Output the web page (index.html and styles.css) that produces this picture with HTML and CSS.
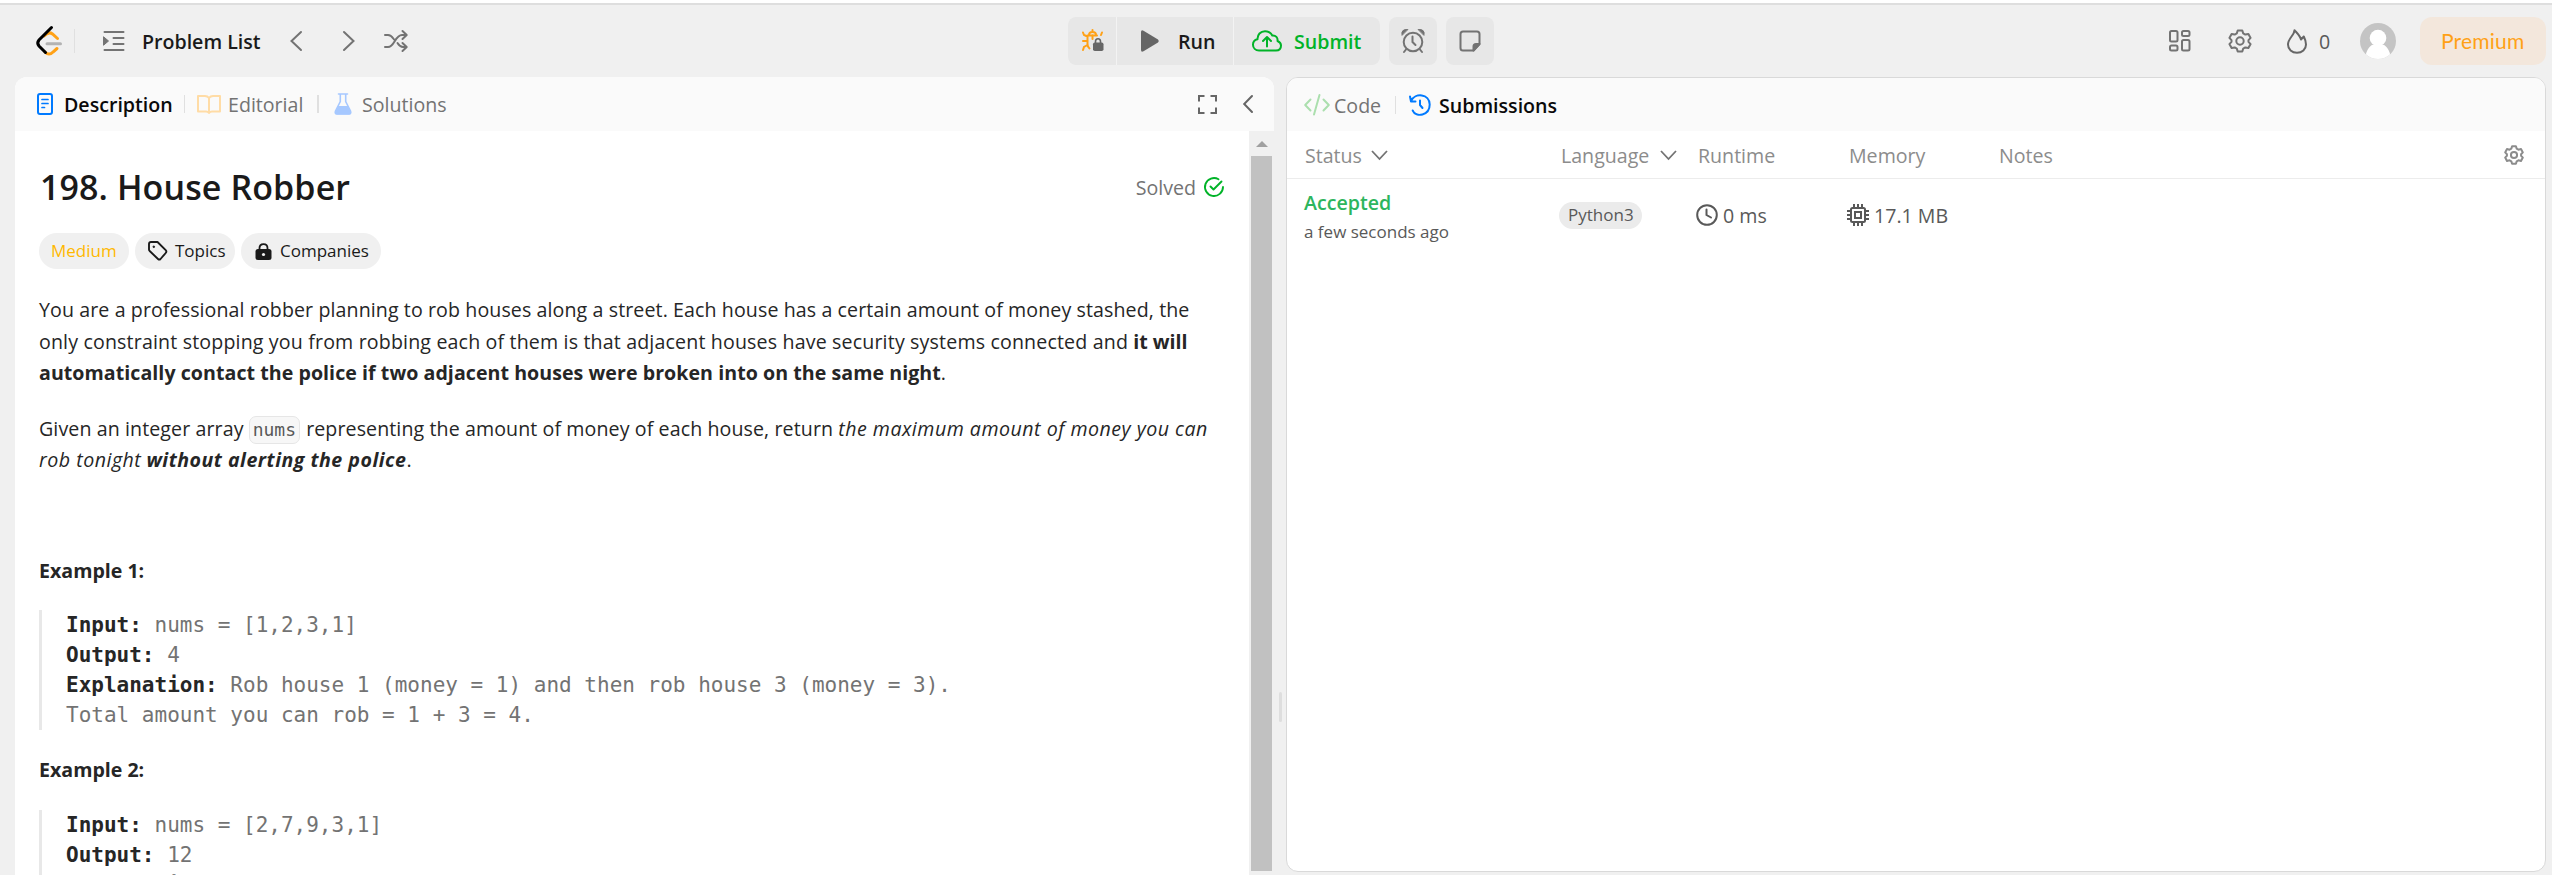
FILE: index.html
```html
<!DOCTYPE html>
<html lang="en">
<head>
<meta charset="utf-8">
<title>House Robber</title>
<link rel="stylesheet" href="styles.css">
</head>
<body>
<header class="topbar">
  <div class="nav">
    <svg class="logo" viewBox="0 0 26 30" fill="none" stroke-width="3" stroke-linecap="round"><path d="M8 10Q12.500 5 16.500 8L21.500 12.500M9 26Q13 30 17 26L21 22.500" stroke="#ffa116"/><path d="M15.500 1.500L3 14Q.500 17 3 20L9.500 26.500" stroke="#000"/><path d="M11 17.700H24.500" stroke="#b3b3b3"/></svg>
    <i class="sep sep-nav"></i>
    <svg class="list-icon" viewBox="0 0 22 20" fill="none" stroke="#737373" stroke-width="2" stroke-linecap="round"><path d="M1.500 1H20.500M10.500 7H20.500M10.500 13H20.500M1.500 19H20.500"/><path d="M.800 6L5.500 10L.800 14Z" fill="#737373" stroke-width="1"/></svg>
    <span class="t problem-list">Problem List</span>
    <svg class="prev" viewBox="0 0 12 20" fill="none" stroke="#737373" stroke-width="2" stroke-linecap="round"><path d="M11 1L1.500 10L11 19"/></svg>
    <svg class="next" viewBox="0 0 12 20" fill="none" stroke="#737373" stroke-width="2" stroke-linecap="round"><path d="M1 1L10.500 10L1 19"/></svg>
    <svg class="shuffle" viewBox="0 0 24 22" fill="none" stroke="#737373" stroke-width="2" stroke-linecap="round" stroke-linejoin="round"><path d="M1 5H4C7.500 5 8.500 7.500 10 9.500M1 17H4C10.500 17 11 5 18 5H22.500M13.500 13C15 15.500 16 17 19 17H22.500M18.500 1L22.700 5L18.500 9M18.500 13L22.700 17L18.500 21"/></svg>
  </div>
  <div class="actions">
    <div class="group">
      <button class="debug"><svg class="bug" viewBox="0 0 22 22" fill="none" stroke="#ffa116" stroke-width="2" stroke-linecap="round"><path d="M7 5C7 1 14 1 14 5M5.500 5.500H15M5.500 5.500V14Q5.500 17 7.500 18.500M10.500 1V0M1 2.500L2 5L5.500 6.500M1 11H5M5.500 15L2 17L1 20M20 2.500L19 5"/><path d="M10.500 5.500V9"/><path d="M13.500 13V11.500C13.500 7.800 18.500 7.800 18.500 11.500V13" stroke="#666" stroke-width="1.600"/><rect x="11" y="12.500" width="10.500" height="8.500" rx="1.800" fill="#666" stroke="none"/></svg></button>
      <button class="run"><svg class="play" viewBox="0 0 18 22"><path d="M0 2Q0-.500 2.500.700L17 9.500Q18.700 11 17 12.500L2.500 21.300Q0 22.500 0 20Z" fill="#666"/></svg><span class="t">Run</span></button>
      <button class="submit"><svg class="cloud" viewBox="0 0 30 22" fill="none" stroke="#01b328" stroke-width="2" stroke-linecap="round" stroke-linejoin="round"><path d="M7 20.500C3.500 20.500 1 18 1 14.800C1 12 3 9.800 5.500 9.300C5.300 4.500 8.500 1.200 13 1.200C16.500 1.200 19 3 20.300 5.500C23.800 5.200 26 7.500 25.500 11C28 12 29 13.700 29 15.500C29 18.500 27 20.500 24 20.500ZM15 16.500V7.500M11 11L15 7L19 11"/></svg><span class="t">Submit</span></button>
    </div>
    <button class="square"><svg class="alarm" viewBox="0 0 24 24" fill="none" stroke="#737373" stroke-width="2" stroke-linecap="round"><circle cx="12" cy="13" r="9.300"/><path d="M11.500 7.500V13L14.500 16M5 20.500L3 23M19 20.500L21 23"/><path d="M1 6Q-.300 0 6.500 .500ZM23 6Q24.300 0 17.500 .500Z" fill="#737373" stroke-width="1" stroke-linejoin="round"/></svg></button>
    <button class="square"><svg class="note" viewBox="0 0 22 22" fill="none" stroke="#737373" stroke-width="2" stroke-linejoin="round"><path d="M4 1.500H18Q20.500 1.500 20.500 4V14L14.500 20.500H4Q1.500 20.500 1.500 18V4Q1.500 1.500 4 1.500Z"/><path d="M14.500 20.500V16.500Q14.500 14 17 14H20.500Z" fill="#737373"/></svg></button>
  </div>
  <div class="account">
    <svg class="grid-icon" viewBox="0 0 22 22" fill="none" stroke="#737373" stroke-width="2"><rect x="1" y="1" width="7.500" height="10.500" rx="1.500"/><rect x="13" y="1" width="7.500" height="5" rx="1.500"/><rect x="1" y="15.500" width="7.500" height="5" rx="1.500"/><rect x="13" y="10" width="7.500" height="10.500" rx="1.500"/></svg>
    <svg class="gear" viewBox="0 0 24 24" fill="none" stroke="#737373" stroke-width="2" stroke-linejoin="round"><path d="M9.700 1.500H14.300L15.200 4.400L17.300 5.600L20.400 4.900L22.600 8.900L20.500 11.100V12.900L22.600 15.100L20.400 19.100L17.300 18.400L15.200 19.600L14.300 22.500H9.700L8.800 19.600L6.700 18.400L3.600 19.100L1.400 15.100L3.500 12.900V11.100L1.400 8.900L3.600 4.900L6.700 5.600L8.800 4.400Z"/><circle cx="12" cy="12" r="3.700"/></svg>
    <div class="streak"><svg class="flame" viewBox="0 0 20 25" fill="none" stroke="#666" stroke-width="2" stroke-linejoin="round"><path d="M7.500 1.200C7.500 6 1 9.500 1 15.500C1 20.500 5 23.800 10 23.800S19 20.500 19 15.500C19 12 17.800 9.500 16.800 7.500L14 10.500C13 6.500 10 4 7.500 1.200Z"/></svg><span class="t">0</span></div>
    <svg class="avatar" viewBox="0 0 36 36"><clipPath id="round"><circle cx="18" cy="18" r="18"/></clipPath><g clip-path="url(#round)"><rect width="36" height="36" fill="#c4c4c4"/><circle cx="18" cy="15" r="8.300" fill="#fff"/><path d="M5 36C6 26 11 21.500 14 21.500H22C25 21.500 30 26 31 36Z" fill="#fff"/></g></svg>
    <button class="premium"><span>Premium</span></button>
  </div>
</header>
<main class="workspace">
  <section class="panel problem">
    <div class="tabs">
      <svg class="doc" viewBox="0 0 16 22" fill="none" stroke="#007aff" stroke-width="2" stroke-linecap="round"><rect x="1" y="1" width="14" height="20" rx="2"/><path d="M5 6.500H11M5 10.500H11M5 14.500H7.500" stroke-width="1.700"/></svg>
      <span class="t tab active description">Description</span>
      <i class="sep"></i>
      <svg class="book" viewBox="0 0 24 19" fill="none" stroke="#ffdca6" stroke-width="2" stroke-linejoin="round"><path d="M12 3Q10.500 1 8 1H1V16.500H9Q11 16.500 12 18Q13 16.500 15 16.500H23V1H16Q13.500 1 12 3V17"/></svg>
      <span class="t tab editorial">Editorial</span>
      <i class="sep"></i>
      <svg class="flask" viewBox="0 0 18 22"><path d="M4.500 1H13.500M6.300 1V8.500L1.500 18Q.500 21 3 21H15Q17.500 21 16.500 18L11.700 8.500V1" fill="none" stroke="#a6c8ff" stroke-width="1.600" stroke-linecap="round"/><path d="M4 13H14L17 19Q17.500 21.500 15 21.500H3Q.500 21.500 1 19Z" fill="#a6c8ff"/></svg>
      <span class="t tab solutions">Solutions</span>
      <svg class="expand" viewBox="0 0 19 19" fill="none" stroke="#666" stroke-width="2"><path d="M1 6.500V1H6.500M12.500 1H18V6.500M18 12.500V18H12.500M6.500 18H1V12.500"/></svg>
      <svg class="collapse" viewBox="0 0 10 18" fill="none" stroke="#666" stroke-width="2" stroke-linecap="round"><path d="M9 1L1.200 9L9 17"/></svg>
    </div>
    <div class="body">
      <article class="content">
        <div class="title-row">
          <h1>198. House Robber</h1>
          <div class="solved"><span class="t">Solved</span><svg class="check" viewBox="0 0 20 20" fill="none" stroke="#01b328" stroke-width="1.900" stroke-linecap="round" stroke-linejoin="round"><path d="M14.500 2.200A9 9 0 1 0 19 10M6.500 9.500L9.500 12.500L17.500 4.500"/></svg></div>
        </div>
        <div class="chips">
          <span class="chip medium">Medium</span>
          <span class="chip topics"><svg class="tag" viewBox="0 0 20 20" fill="none" stroke="#1a1a1a" stroke-width="1.900" stroke-linejoin="round"><path d="M1 3Q1 1 3 1H9.500L17.700 9.200Q19 10.500 17.700 12L12.500 18Q11.300 19.200 10 18L1.700 10Q1 9.500 1 8.500Z"/><circle cx="5.800" cy="5.800" r=".800" fill="#1a1a1a" stroke-width="1"/></svg><span>Topics</span></span>
          <span class="chip companies"><svg class="lock" viewBox="0 0 17 17"><path d="M4.500 7V5C4.500-.300 12.500-.300 12.500 5V7" fill="none" stroke="#1a1a1a" stroke-width="1.800"/><rect x=".500" y="6" width="16" height="11" rx="2.500" fill="#1a1a1a"/><circle cx="8.500" cy="11.500" r="1.600" fill="#f0f0f0"/></svg><span>Companies</span></span>
        </div>
        <p class="first"><span class="l1">You are a professional robber planning to rob houses along a street. Each house has a certain amount of money stashed, the</span><br><span class="l2">only constraint stopping you from robbing each of them is that adjacent houses have security systems connected and</span> <strong>it will</strong><br><strong class="l3">automatically contact the police if two adjacent houses were broken into on the same night</strong>.</p>
        <p class="second"><span class="l4">Given an integer array</span> <code>nums</code> <span class="l4">representing the amount of money of each house, return</span> <em>the maximum amount of money you can</em><br><em>rob tonight</em> <em><strong>without alerting the police</strong></em>.</p>
        <p class="example one"><strong>Example 1:</strong></p>
        <pre><strong>Input:</strong> nums = [1,2,3,1]
<strong>Output:</strong> 4
<strong>Explanation:</strong> Rob house 1 (money = 1) and then rob house 3 (money = 3).
Total amount you can rob = 1 + 3 = 4.</pre>
        <p class="example two"><strong>Example 2:</strong></p>
        <pre><strong>Input:</strong> nums = [2,7,9,3,1]
<strong>Output:</strong> 12
<strong>Explanation:</strong></pre>
      </article>
      <div class="scrollbar"><i class="arrow"></i><i class="thumb"></i></div>
    </div>
  </section>
  <div class="splitter"><i></i></div>
  <section class="panel submissions">
    <div class="tabs">
      <svg class="code-icon" viewBox="0 0 26 22" fill="none" stroke="#abdfae" stroke-width="2" stroke-linecap="round" stroke-linejoin="round"><path d="M6.500 5.500L1.200 11L6.500 16.500M19.500 5.500L24.800 11L19.500 16.500M15.500 1L10 20.500"/></svg>
      <span class="t tab code-tab">Code</span>
      <i class="sep"></i>
      <svg class="history" viewBox="0 0 22 22" fill="none" stroke="#007aff" stroke-width="2" stroke-linecap="round" stroke-linejoin="round"><path d="M1 2.500L2 7.500H6.500M2 7C6 -1.500 20.500 -.500 20.700 10.500C20.700 21.500 7 24 3.700 16.500M11 6.500V11L13.500 14"/></svg>
      <span class="t tab active subs">Submissions</span>
    </div>
    <div class="row head">
      <span class="status-h"><span class="t">Status</span><svg class="down" viewBox="0 0 17 10" fill="none" stroke="#737373" stroke-width="1.800"><path d="M1 1L8.500 9L16 1"/></svg></span>
      <span class="lang-h"><span class="t">Language</span><svg class="down" viewBox="0 0 17 10" fill="none" stroke="#737373" stroke-width="1.800"><path d="M1 1L8.500 9L16 1"/></svg></span>
      <span class="runtime-h"><span class="t">Runtime</span></span>
      <span class="memory-h"><span class="t">Memory</span></span>
      <span class="notes-h"><span class="t">Notes</span></span>
      <svg class="gear small" viewBox="0 0 24 24" fill="none" stroke="#8c8c8c" stroke-width="2.400" stroke-linejoin="round"><path d="M9.700 1.500H14.300L15.200 4.400L17.300 5.600L20.400 4.900L22.600 8.900L20.500 11.100V12.900L22.600 15.100L20.400 19.100L17.300 18.400L15.200 19.600L14.300 22.500H9.700L8.800 19.600L6.700 18.400L3.600 19.100L1.400 15.100L3.500 12.900V11.100L1.400 8.900L3.600 4.900L6.700 5.600L8.800 4.400Z"/><circle cx="12" cy="12" r="3.700"/></svg>
    </div>
    <div class="row entry">
      <div class="status"><div class="accepted">Accepted</div><div class="when">a few seconds ago</div></div>
      <div class="pill">Python3</div>
      <div class="metric"><svg viewBox="0 0 22 22" fill="none" stroke="#595959" stroke-width="2" stroke-linecap="round"><circle cx="11" cy="11" r="9.800"/><path d="M10.500 5.500V11L15 13.500"/></svg><span class="t">0 ms</span></div>
      <div class="metric"><svg viewBox="0 0 22 22" fill="none" stroke="#595959" stroke-width="2"><rect x="4" y="4" width="14" height="14" rx="1.500"/><rect x="8" y="8" width="6" height="6"/><path d="M7 0V4M11 0V4M15 0V4M7 18V22M11 18V22M15 18V22M0 7H4M0 11H4M0 15H4M18 7H22M18 11H22M18 15H22"/></svg><span class="t">17.1 MB</span></div>
    </div>
  </section>
</main>
</body>
</html>
```
FILE: styles.css
```css
* { box-sizing: border-box; }
body {
  margin: 0;
  width: 2552px;
  height: 875px;
  overflow: hidden;
  display: flex;
  flex-direction: column;
  background: #f0f0f0;
  border-top: 3px solid #fff;
  color: #262626;
  font: 19.6px/30px "Open Sans", "Noto Sans", sans-serif;
}
svg { display: block; flex: none; overflow: visible; }
button { border: 0; padding: 0; margin: 0; font: inherit; color: inherit; background: #e7e7e7; display: flex; align-items: center; height: 48px; }
.t { white-space: nowrap; padding-top: 2px; }

.topbar { border-top: 2px solid #dedede; height: 74px; flex: none; display: flex; align-items: flex-start; padding: 12px 6px 0 36px; }
.nav { display: flex; align-items: center; height: 47px; width: 1032px; flex: none; }
.logo { width: 26px; height: 30px; }
.sep { display: block; flex: none; width: 1px; height: 18px; background: #e0e0e0; }
.sep-nav { height: 24px; margin: 0 28px 0 12px; }
.list-icon { width: 22px; height: 20px; }
.problem-list { font-weight: 600; color: #1a1a1a; margin-left: 17px; width: 118px; }
.prev { width: 12px; height: 20px; margin-left: 30px; }
.next { width: 12px; height: 20px; margin-left: 41px; }
.shuffle { width: 24px; height: 22px; margin-left: 29px; }

.actions { display: flex; gap: 9px; }
.group { display: flex; gap: 1px; border-radius: 8px; overflow: hidden; width: 312px; background: #f3f3f3; }
.debug { width: 48px; padding-left: 14px; }
.bug { width: 22px; height: 22px; }
.run { width: 116px; padding-left: 24px; gap: 19px; font-weight: 600; color: #1a1a1a; }
.play { width: 18px; height: 22px; }
.submit { flex: 1; padding-left: 18px; gap: 12px; font-weight: 600; color: #01b328; }
.cloud { width: 30px; height: 22px; }
.square { width: 48px; border-radius: 8px; justify-content: center; }
.alarm { width: 24px; height: 24px; }
.note { width: 22px; height: 22px; }

.account { margin-left: auto; display: flex; align-items: center; height: 48px; }
.grid-icon { width: 22px; height: 22px; margin-right: 37px; }
.gear { width: 24px; height: 24px; }
.streak { display: flex; align-items: center; gap: 12px; margin-left: 35px; width: 73px; color: #595959; }
.flame { width: 20px; height: 25px; }
.avatar { width: 36px; height: 36px; }
.premium { width: 126px; margin-left: 24px; border-radius: 12px; background: #f3e7dc; color: #ffa116; padding-left: 21px; font: 21px/30px Lato, sans-serif; letter-spacing: .2px; }

.workspace { flex: 1; min-height: 0; display: flex; padding-left: 15px; }
.panel { background: #fff; overflow: hidden; display: flex; flex-direction: column; }
.problem { width: 1259px; border-radius: 12px 12px 0 0; }
.tabs { height: 54px; flex: none; background: #fafafa; display: flex; align-items: center; }
.tab { color: #737373; }
.tab.active { color: #0a0a0a; font-weight: 600; }
.problem .tabs { padding-left: 22px; }
.doc { width: 16px; height: 22px; }
.description { margin-left: 11px; width: 108px; }
.description + .sep { margin-left: 12px; }
.book { width: 24px; height: 19px; margin-left: 12px; }
.editorial { margin-left: 7px; width: 75px; }
.editorial + .sep { margin-left: 14px; width: 2px; }
.flask { width: 18px; height: 22px; margin-left: 15px; }
.solutions { margin-left: 10px; }
.expand { width: 19px; height: 19px; margin-left: auto; }
.collapse { width: 10px; height: 18px; margin: 0 21px 0 26px; }

.body { flex: 1; min-height: 0; display: flex; }
.content { width: 1234px; height: 744px; overflow: hidden; padding: 35px 25px 0 24px; }
.title-row { display: flex; align-items: center; justify-content: space-between; height: 42px; }
h1 { margin: 0; font-size: 34px; line-height: 42px; font-weight: 600; color: #1a1a1a; padding-left: 1px; letter-spacing: .1px; }
.solved { display: flex; align-items: center; gap: 8px; color: #737373; }
.check { width: 20px; height: 20px; }
.chips { display: flex; gap: 6px; margin-top: 25px; }
.chip { height: 36px; border-radius: 18px; background: #f0f0f0; display: flex; align-items: center; font-size: 17px; color: #1a1a1a; }
.medium { width: 90px; padding-left: 12px; color: #ffb800; }
.topics { width: 100px; padding-left: 13px; gap: 7px; }
.companies { width: 140px; padding-left: 14px; gap: 8px; }
.tag { width: 20px; height: 20px; }
.lock { width: 17px; height: 17px; }
p { margin: 0; line-height: 31.5px; white-space: nowrap; }
strong { font-weight: 700; }
.first { margin-top: 25px; }
.second { margin-top: 24px; }
.l1 { letter-spacing: .1px; }
.l2 { letter-spacing: .16px; }
.l3 { letter-spacing: .05px; }
.l4 { letter-spacing: .1px; }
em { letter-spacing: .5px; }
code { font: 18px/20px "DejaVu Sans Mono", monospace; display: inline-block; background: #f7f7f7; border: 1px solid #e6e6e6; border-radius: 7px; padding: 3px; margin-right: 1px; color: #595959; }
.example.one { margin-top: 79px; }
pre { margin: 24px 0 0; border-left: 3px solid #e8e8e8; padding-left: 24px; font: 21px/30px "DejaVu Sans Mono", monospace; color: #737373; }
pre strong { color: #262626; }
.example.two { margin-top: 24px; }

.scrollbar { width: 25px; height: 744px; background: #f0f0f0; display: flex; flex-direction: column; align-items: center; }
.arrow { border: 6px solid transparent; border-top: 0; border-bottom: 6px solid #a0a0a0; margin-top: 10px; }
.thumb { width: 21px; height: 715px; margin-top: 9px; background: #c1c1c1; }
.splitter { width: 12px; flex: none; display: flex; justify-content: center; align-items: flex-start; padding-top: 615px; }
.splitter i { width: 3px; height: 30px; border-radius: 2px; background: #dedede; }

.submissions { width: 1260px; height: 795px; border: 1px solid #d9d9d9; border-radius: 12px; }
.submissions .tabs { padding-left: 17px; height: 53px; }
.code-icon { width: 26px; height: 22px; }
.code-tab { margin-left: 4px; width: 49px; }
.code-tab + .sep { margin-left: 12px; }
.history { width: 22px; height: 22px; margin-left: 13px; }
.subs { margin-left: 8px; }
.row { display: grid; grid-template-columns: 255px 137px 151px 151px 506px 20px; padding-left: 17px; }
.head { height: 48px; align-items: center; border-bottom: 1px solid #ececec; color: #8c8c8c; }
.head span { display: flex; align-items: center; }
.down { width: 17px; height: 10px; }
.status-h { gap: 9px; padding-left: 1px; }
.lang-h { gap: 11px; padding-left: 2px; }
.runtime-h, .memory-h { padding-left: 2px; }
.notes-h { padding-left: 1px; }
.gear.small { width: 20px; height: 20px; }
.entry { align-items: center; height: 72px; color: #595959; }
.status { padding-top: 3px; }
.accepted { color: #2db55d; font-weight: 600; line-height: 30px; }
.when { font-size: 17px; line-height: 27px; }
.pill { display: flex; align-items: center; width: 83px; height: 27px; padding-left: 9px; border-radius: 14px; background: #ebebeb; font-size: 17px; }
.metric { display: flex; align-items: center; gap: 5px; }
.metric svg { width: 22px; height: 22px; }
```
